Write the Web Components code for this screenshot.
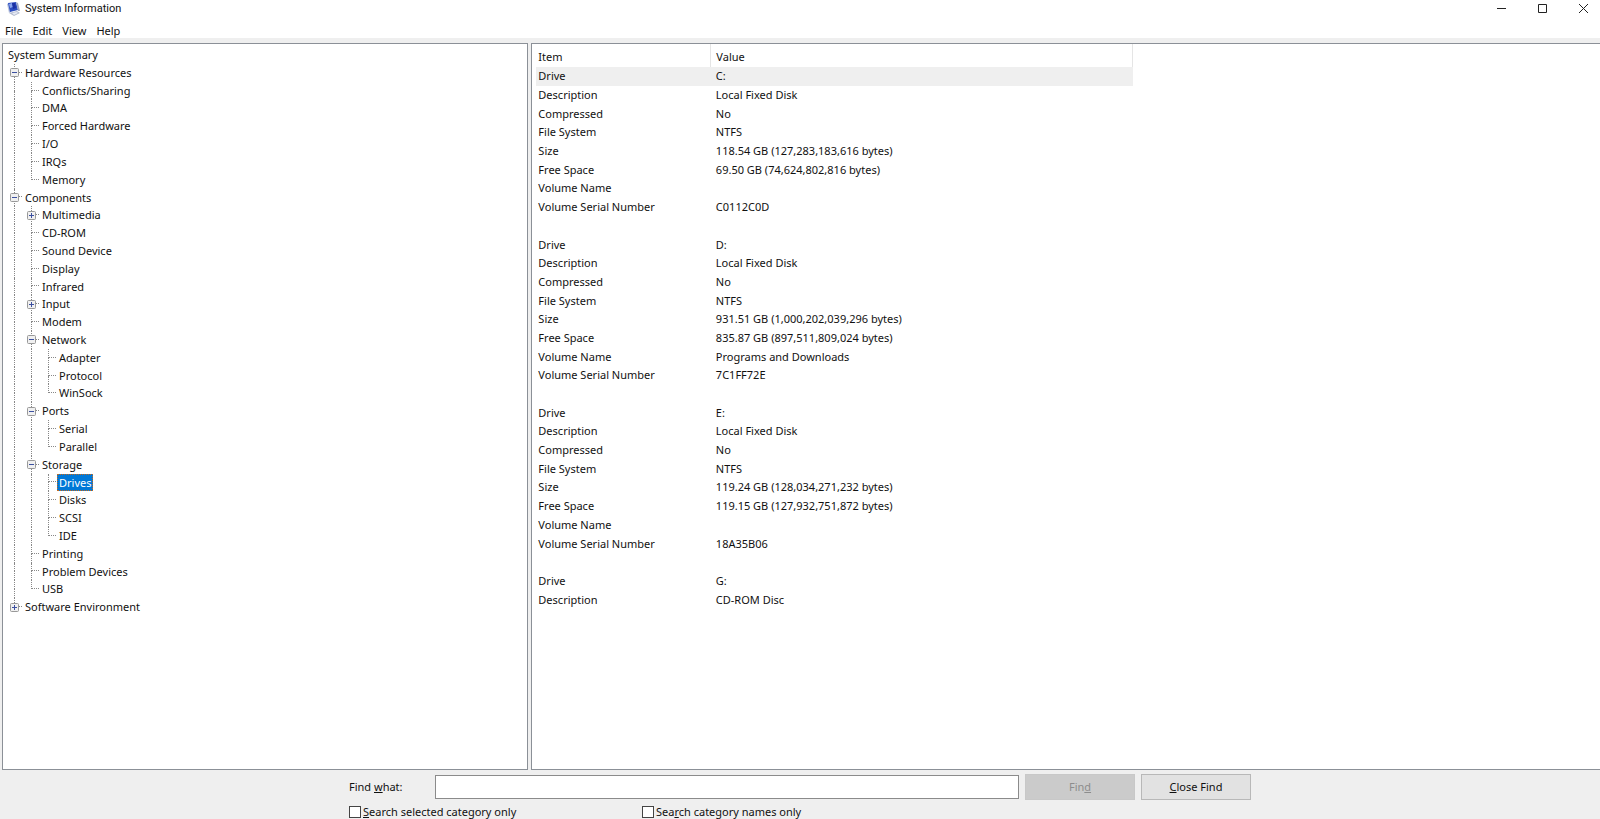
<!DOCTYPE html>
<html lang="en">
<head>
<meta charset="utf-8">
<title>System Information</title>
<style>
    html, body {
        height: 100%;
        margin: 0;
    }
    body {
        font: 11px/16px "Noto Sans", "Open Sans", sans-serif;
        color: #111;
        background: #fff;
        overflow: hidden;
    }
</style>
</head>
<body>

<system-info-window>
    <title-bar slot="title">System Information</title-bar>
    <menu-bar slot="menu">
        <button>File</button>
        <button>Edit</button>
        <button>View</button>
        <button>Help</button>
    </menu-bar>
    <category-tree slot="tree"></category-tree>
    <detail-list slot="details"></detail-list>
    <find-bar slot="find"></find-bar>
</system-info-window>

<script>
const categories = [
    ['System Summary', 0],
    ['Hardware Resources', 0, 'open'],
    ['Conflicts/Sharing', 1],
    ['DMA', 1],
    ['Forced Hardware', 1],
    ['I/O', 1],
    ['IRQs', 1],
    ['Memory', 1],
    ['Components', 0, 'open'],
    ['Multimedia', 1, 'closed'],
    ['CD-ROM', 1],
    ['Sound Device', 1],
    ['Display', 1],
    ['Infrared', 1],
    ['Input', 1, 'closed'],
    ['Modem', 1],
    ['Network', 1, 'open'],
    ['Adapter', 2],
    ['Protocol', 2],
    ['WinSock', 2],
    ['Ports', 1, 'open'],
    ['Serial', 2],
    ['Parallel', 2],
    ['Storage', 1, 'open'],
    ['Drives', 2],
    ['Disks', 2],
    ['SCSI', 2],
    ['IDE', 2],
    ['Printing', 1],
    ['Problem Devices', 1],
    ['USB', 1],
    ['Software Environment', 0, 'closed'],
];

const details = [
    ['Drive', 'C:'],
    ['Description', 'Local Fixed Disk'],
    ['Compressed', 'No'],
    ['File System', 'NTFS'],
    ['Size', '118.54 GB (127,283,183,616 bytes)'],
    ['Free Space', '69.50 GB (74,624,802,816 bytes)'],
    ['Volume Name', ''],
    ['Volume Serial Number', 'C0112C0D'],
    ['', ''],
    ['Drive', 'D:'],
    ['Description', 'Local Fixed Disk'],
    ['Compressed', 'No'],
    ['File System', 'NTFS'],
    ['Size', '931.51 GB (1,000,202,039,296 bytes)'],
    ['Free Space', '835.87 GB (897,511,809,024 bytes)'],
    ['Volume Name', 'Programs and Downloads'],
    ['Volume Serial Number', '7C1FF72E'],
    ['', ''],
    ['Drive', 'E:'],
    ['Description', 'Local Fixed Disk'],
    ['Compressed', 'No'],
    ['File System', 'NTFS'],
    ['Size', '119.24 GB (128,034,271,232 bytes)'],
    ['Free Space', '119.15 GB (127,932,751,872 bytes)'],
    ['Volume Name', ''],
    ['Volume Serial Number', '18A35B06'],
    ['', ''],
    ['Drive', 'G:'],
    ['Description', 'CD-ROM Disc'],
];

class BaseElement extends HTMLElement {
    constructor(html) {
        super();
        this.attachShadow({ mode: 'open' });
        const tmpl = document.createElement('template');
        tmpl.innerHTML = html;
        this.shadowRoot.appendChild(tmpl.content.cloneNode(true));
    }

    $(id) { return this.shadowRoot.getElementById(id) }
}

class SystemInfoWindow extends BaseElement {
    constructor() {
        super(`
            <style>
                :host {
                    display: flex;
                    flex-direction: column;
                    height: 100vh;
                }
                main {
                    flex: 1;
                    min-height: 0;
                    display: grid;
                    grid-template-columns: 33fr 67fr;
                    column-gap: 3px;
                    padding: 5px 0 0 2px;
                    background: #efefef;
                }
            </style>
            <slot name="title"></slot>
            <slot name="menu"></slot>
            <main>
                <slot name="tree"></slot>
                <slot name="details"></slot>
            </main>
            <slot name="find"></slot>
        `);
    }
}

class TitleBar extends BaseElement {
    constructor() {
        super(`
            <style>
                :host {
                    display: flex;
                    align-items: center;
                    height: 17px;
                    padding: 0 1px 0 6px;
                    font-family: Roboto, "Liberation Sans", sans-serif;
                }
                .caption {
                    flex: 1;
                    padding-left: 3px;
                }
                .controls {
                    display: flex;
                    gap: 9px;
                }
                button {
                    display: flex;
                    justify-content: center;
                    align-items: center;
                    width: 32px;
                    height: 17px;
                    padding: 0;
                    border: 0;
                    background: none;
                }
                .controls svg {
                    fill: none;
                    stroke: #222;
                }
            </style>
            <svg width="16" height="16" viewBox="0 0 16 16" aria-hidden="true">
                <path d="M1 3l2-1 2 9-2 1z" fill="#b9c3dd"/>
                <path d="M2 2l8-1 2 8-8 2z" fill="#2a4cc0"/>
                <path d="M3 3l3-1 1 4-3 1z" fill="#8ba6ee"/>
                <path d="M6 2l3 0 1 5-3 1z" fill="#1b31a4"/>
                <path d="M10 1l2 1 2 8-2 0z" fill="#9aa5c4"/>
                <path d="M3 12l8-2 3 2-6 3z" fill="#b4bccf"/>
                <path d="M6 12l5-1 1 1-4 2z" fill="#e6eaf4"/>
            </svg>
            <span class="caption"><slot></slot></span>
            <div class="controls">
                <button aria-label="Minimize"><svg width="11" height="11"><path d="M1 5.500h9"/></svg></button>
                <button aria-label="Maximize"><svg width="11" height="11"><path d="M1.500 1.500h8v8h-8z"/></svg></button>
                <button aria-label="Close"><svg width="11" height="11"><path d="M1 1l9 9M10 1l-9 9"/></svg></button>
            </div>
        `);
    }
}

class MenuBar extends BaseElement {
    constructor() {
        super(`
            <style>
                :host {
                    display: flex;
                    align-items: center;
                    gap: 10px;
                    height: 21px;
                    padding: 6px 5px 0;
                    box-sizing: border-box;
                }
                ::slotted(button) {
                    padding: 0;
                    border: 0;
                    background: none;
                    font: inherit;
                    color: inherit;
                }
            </style>
            <slot></slot>
        `);
    }
}

class TreeRow extends BaseElement {
    constructor() {
        super(`
            <style>
                :host {
                    display: flex;
                    align-items: stretch;
                    min-height: 0;
                    white-space: nowrap;
                }
                #guides {
                    display: flex;
                }
                .cell {
                    display: grid;
                    grid-template-rows: 1fr 1fr;
                    width: 10px;
                    padding-left: 7px;
                }
                .cell i {
                    border-left: 1px dotted #888;
                }
                .cell i.none {
                    border-left-color: transparent;
                }
                .cell.joint i:first-child {
                    margin-right: 2px;
                    border-bottom: 1px dotted #888;
                }
                .box {
                    display: flex;
                    align-items: center;
                    position: relative;
                }
                .box svg {
                    position: absolute;
                    left: -14px;
                    background: #fff;
                }
                #label {
                    margin-left: -1px;
                    padding: 0 2px;
                    line-height: 18px;
                }
                :host([selected]) #label {
                    background: #0078d7;
                    color: #fff;
                    outline: 1px dotted #c66a1c;
                    outline-offset: -1px;
                }
            </style>
            <div id="guides"></div>
            <div class="box" id="box"></div>
            <span id="label"></span>
        `);
    }

    // guides holds one entry for each level: [line above, line below, joint]
    fill(text, state, guides) {
        this.$('label').textContent = text;
        for (const [above, below, joint] of guides) {
            const cell = document.createElement('div');
            cell.className = joint ? 'cell joint' : 'cell';
            cell.innerHTML = `<i class="${above ? '' : 'none'}"></i><i class="${below ? '' : 'none'}"></i>`;
            this.$('guides').appendChild(cell);
        }
        if (state) {
            this.$('box').innerHTML = `
                <svg width="9" height="9" aria-hidden="true">
                    <rect x=".5" y=".5" width="8" height="8" rx="1" fill="#f0f0f0" stroke="#999"/>
                    <path d="M2 4.500h5${state === 'closed' ? 'M4.500 2v5' : ''}" stroke="#3c50a0"/>
                </svg>`;
            this.setAttribute('aria-expanded', state === 'open');
        }
    }
}

class CategoryTree extends BaseElement {
    constructor() {
        super(`
            <style>
                :host {
                    display: block;
                    min-width: 0;
                    padding: 2px 0 0 4px;
                    border: 1px solid #8b9097;
                    background: #fff;
                    overflow: hidden;
                }
                #rows {
                    display: grid;
                    grid-auto-rows: 1fr;
                    height: 570px;
                }
            </style>
            <div id="rows" role="tree" aria-label="Categories"></div>
        `);
    }

    connectedCallback() {
        categories.forEach(([text, level, state], i) => {
            const guides = [];
            for (let l = 0; l <= level; l++) {
                const own = l === level;
                guides.push([i > 0 && (own || this.continues(i, l)), this.continues(i, l), own && i > 0]);
            }
            const row = document.createElement('tree-row');
            row.setAttribute('role', 'treeitem');
            row.setAttribute('aria-level', level + 1);
            if (text === 'Drives') row.setAttribute('selected', '');
            if (i === 0) guides.length = 0;
            row.fill(text, state, guides);
            this.$('rows').appendChild(row);
        });
    }

    // true when a later row sits on this level before the branch ends
    continues(index, level) {
        for (const [, next] of categories.slice(index + 1)) {
            if (next === level) return true;
            if (next < level) return false;
        }
        return false;
    }
}

class DetailList extends BaseElement {
    constructor() {
        super(`
            <style>
                :host {
                    display: block;
                    min-width: 0;
                    padding-left: 4px;
                    border: 1px solid #8b9097;
                    border-right: 0;
                    background: #fff;
                    overflow: hidden;
                }
                table {
                    width: 597px;
                    height: 565px;
                    border-collapse: collapse;
                    table-layout: fixed;
                }
                th, td {
                    padding: 0 0 0 2px;
                    text-align: left;
                    font-weight: normal;
                    line-height: 16px;
                    white-space: nowrap;
                }
                th {
                    height: 21px;
                    padding-top: 2px;
                    border-right: 1px solid #e5e5e5;
                }
                th:first-child {
                    width: 172px;
                }
                th + th, td + td {
                    padding-left: 5px;
                }
                tbody tr:first-child {
                    background: #efefef;
                }
            </style>
            <table>
                <thead><tr><th>Item</th><th>Value</th></tr></thead>
                <tbody id="rows"></tbody>
            </table>
        `);
    }

    connectedCallback() {
        for (const [item, value] of details) {
            const row = this.$('rows').insertRow();
            // a space keeps the separator rows as tall as the others
            row.insertCell().textContent = item || '\u00a0';
            row.insertCell().textContent = value;
        }
    }
}

class FindBar extends BaseElement {
    constructor() {
        super(`
            <style>
                :host {
                    display: block;
                    padding-top: 4px;
                    background: #efefef;
                }
                form {
                    max-width: 902px;
                    margin: 0 auto;
                }
                .row {
                    display: flex;
                    align-items: center;
                }
                .row + .row {
                    margin-top: 5px;
                }
                .what {
                    width: 86px;
                }
                input[type=text] {
                    flex: 1;
                    min-width: 0;
                    height: 24px;
                    padding: 0 4px;
                    border: 1px solid #8b8b8b;
                    box-sizing: border-box;
                    background: #fff;
                    font: inherit;
                }
                button {
                    width: 110px;
                    height: 26px;
                    margin-left: 6px;
                    padding: 0;
                    border: 1px solid #b8b8b8;
                    background: #e2e2e2;
                    font: inherit;
                    color: inherit;
                }
                button:disabled {
                    border-color: #c8c8c8;
                    background: #cbcbcb;
                    color: #8d8d8d;
                }
                .check {
                    display: flex;
                    align-items: center;
                    gap: 2px;
                    width: 293px;
                    height: 14px;
                }
                input[type=checkbox] {
                    appearance: none;
                    width: 12px;
                    height: 12px;
                    margin: 0;
                    border: 1px solid #444;
                    background: #fff;
                }
            </style>
            <form onsubmit="return false">
                <div class="row">
                    <label class="what" for="what">Find <u>w</u>hat:</label>
                    <input type="text" id="what">
                    <button disabled>Fin<u>d</u></button>
                    <button type="button"><u>C</u>lose Find</button>
                </div>
                <div class="row">
                    <label class="check"><input type="checkbox"><span><u>S</u>earch selected category only</span></label>
                    <label class="check"><input type="checkbox"><span>Sea<u>r</u>ch category names only</span></label>
                </div>
            </form>
        `);
    }
}

customElements.define('tree-row', TreeRow);
customElements.define('title-bar', TitleBar);
customElements.define('menu-bar', MenuBar);
customElements.define('category-tree', CategoryTree);
customElements.define('detail-list', DetailList);
customElements.define('find-bar', FindBar);
customElements.define('system-info-window', SystemInfoWindow);
</script>
</body>
</html>
